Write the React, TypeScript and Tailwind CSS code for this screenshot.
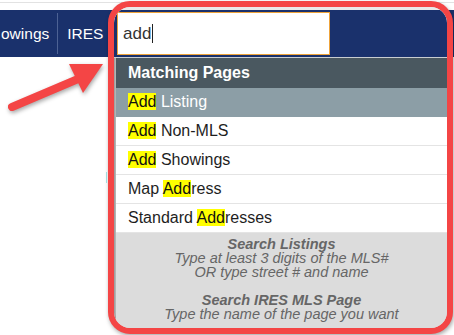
import React from "react";

const font = { fontFamily: '"Liberation Sans", Arial, sans-serif' };

function Hl({ children }: { children: React.ReactNode }) {
  return <span className="bg-[#ffff00] text-[#111]">{children}</span>;
}

export default function App() {
  const rows: { node: React.ReactNode; active?: boolean }[] = [
    { node: <><Hl>Add</Hl> Listing</>, active: true },
    { node: <><Hl>Add</Hl> Non-MLS</> },
    { node: <><Hl>Add</Hl> Showings</> },
    { node: <>Map <Hl>Add</Hl>ress</> },
    { node: <>Standard <Hl>Add</Hl>resses</> },
  ];
  return (
    <div className="relative w-[454px] h-[335px] bg-white overflow-hidden" style={font}>
      {/* page */}
      <div className="h-[2px]" />
      <div className="h-[1px] bg-[#e2e2e2]" />
      <div className="h-[7px]" />
      <div className="h-[47px] bg-[#1a316c] flex items-center text-white text-[15.5px]">
        <span className="pl-[1px] pr-[8px]">owings</span>
        <span className="w-[1px] h-[41px] bg-[#4d6294]" />
        <span className="pl-[9px]">IRES</span>
      </div>
      <div className="absolute left-[106px] top-[172px] w-[1px] h-[11px] bg-[#a8e6ea]" />

      {/* arrow annotation */}
      <svg
        className="absolute left-0 top-0"
        width="120"
        height="120"
        viewBox="0 0 120 120"
        style={{ filter: "drop-shadow(1px 2px 2px rgba(0,0,0,0.35))" }}
      >
        <line x1="12" y1="107" x2="78" y2="79" stroke="#f44545" strokeWidth="8" strokeLinecap="round" />
        <polygon points="69,64 103,64 83,93" fill="#f44545" />
      </svg>

      {/* highlighted frame */}
      <div
        className="absolute left-[108px] top-[1px] w-[345px] h-[333px] border-[6px] border-[#f44545] rounded-[22px] overflow-hidden bg-white"
        style={{ boxShadow: "1px 2px 4px rgba(0,0,0,0.35)" }}
      >
        <div className="flex flex-col h-full rounded-[16px] overflow-hidden shadow-[inset_0_0_3px_rgba(0,0,0,0.45)]">
          <div className="h-[3px] bg-[#e9e9e9]" />
          <div className="h-[47px] bg-[#1a316c] pt-[2px] pl-[3px]">
            <div className="w-[213px] h-[43px] bg-white border border-[#eea33a] flex items-center pl-[5px] text-[17px] text-[#333]">
              <span>add</span>
              <span className="w-[1px] h-[19px] bg-[#222] ml-[1px]" />
            </div>
          </div>
          <div className="h-[1px] bg-[#c9cdd0]" />
          <div className="flex-1 flex flex-col border-l-[2px] border-black/25">
            <div className="h-[30px] bg-[#4a5860] flex items-center pl-[12px] text-white font-bold text-[16px]">
              Matching Pages
            </div>
            {rows.map((r, i) => (
              <div
                key={i}
                className={
                  r.active
                    ? "h-[29px] flex items-center pl-[12px] text-[16px] bg-[#8c9ea6] text-white border-b border-[#8c9ea6]"
                    : "h-[29px] flex items-center pl-[12px] text-[16px] bg-white text-[#1e1e1e] border-b border-[#e4e4e4]"
                }
              >
                <span>{r.node}</span>
              </div>
            ))}
            <div className="flex-1 bg-[#dcdcdc] pt-[4px] text-center italic text-[#666] text-[14.5px] leading-[14px]">
              <div className="font-bold">Search Listings</div>
              <div>Type at least 3 digits of the MLS#</div>
              <div>OR type street # and name</div>
              <div className="h-[14px]" />
              <div className="font-bold">Search IRES MLS Page</div>
              <div>Type the name of the page you want</div>
            </div>
          </div>
        </div>
      </div>
    </div>
  );
}
